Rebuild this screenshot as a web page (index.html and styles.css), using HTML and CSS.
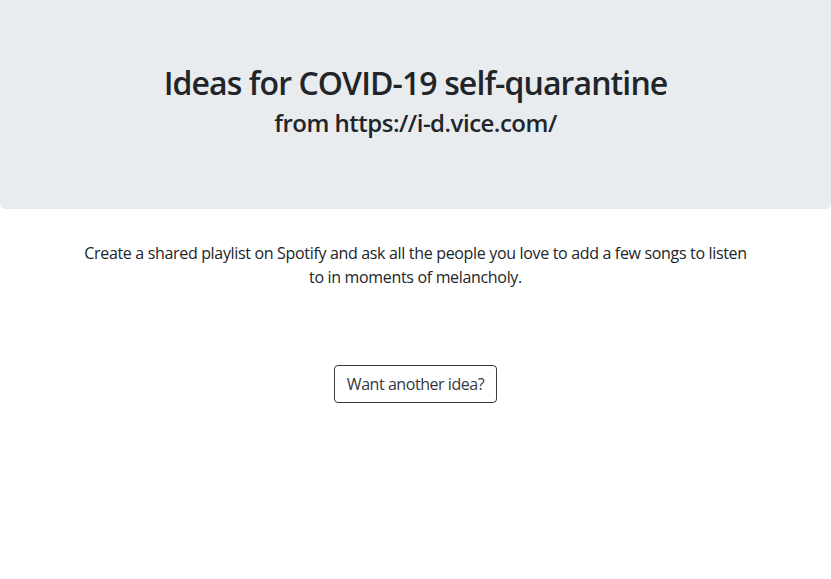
FILE: index.html
```html
<!DOCTYPE html>
<html lang="en">
<head>
<meta charset="utf-8">
<title>Ideas for COVID-19 self-quarantine</title>
<link rel="stylesheet" href="styles.css">
</head>
<body>
  <header class="jumbotron">
    <h1 class="title">Ideas for COVID-19 self-quarantine</h1>
    <h4 class="subtitle">from https://i-d.vice.com/</h4>
  </header>
  <main class="container">
    <p class="idea">Create a shared playlist on Spotify and ask all the people you love to add a few songs to listen to in moments of melancholy.</p>
    <div class="actions">
      <button class="btn" type="button">Want another idea?</button>
    </div>
  </main>
</body>
</html>
```
FILE: styles.css
```css
* { box-sizing: border-box; }
html, body { margin: 0; padding: 0; }
body {
  font-family: "Open Sans", "Noto Sans", sans-serif;
  font-size: 16px;
  line-height: 1.5;
  color: #212529;
  background: #fff;
}
.jumbotron {
  background: #e9ecef;
  border-radius: 0 0 5px 5px;
  height: 209px;
  padding-top: 64px;
  text-align: center;
  margin-bottom: 32px;
}
.title {
  margin: 0 0 6px;
  font-size: 32px;
  font-weight: 600;
  line-height: 38px;
  letter-spacing: -0.9px;
}
.subtitle {
  margin: 0;
  font-size: 24px;
  font-weight: 600;
  line-height: 29px;
  letter-spacing: -0.5px;
}
.container {
  width: 720px;
  margin: 0 auto;
  padding: 0 15px;
  text-align: center;
}
.idea {
  max-width: 675px;
  margin: 0 auto 16px;
  font-size: 16px;
  line-height: 24px;
  letter-spacing: -0.33px;
}
.actions {
  padding-top: 60px;
}
.btn {
  font-family: inherit;
  font-size: 16px;
  line-height: 24px;
  color: #343a40;
  background: transparent;
  border: 1px solid #343a40;
  border-radius: 4px;
  padding: 6px 12px;
  letter-spacing: -0.45px;
  cursor: pointer;
}
```
